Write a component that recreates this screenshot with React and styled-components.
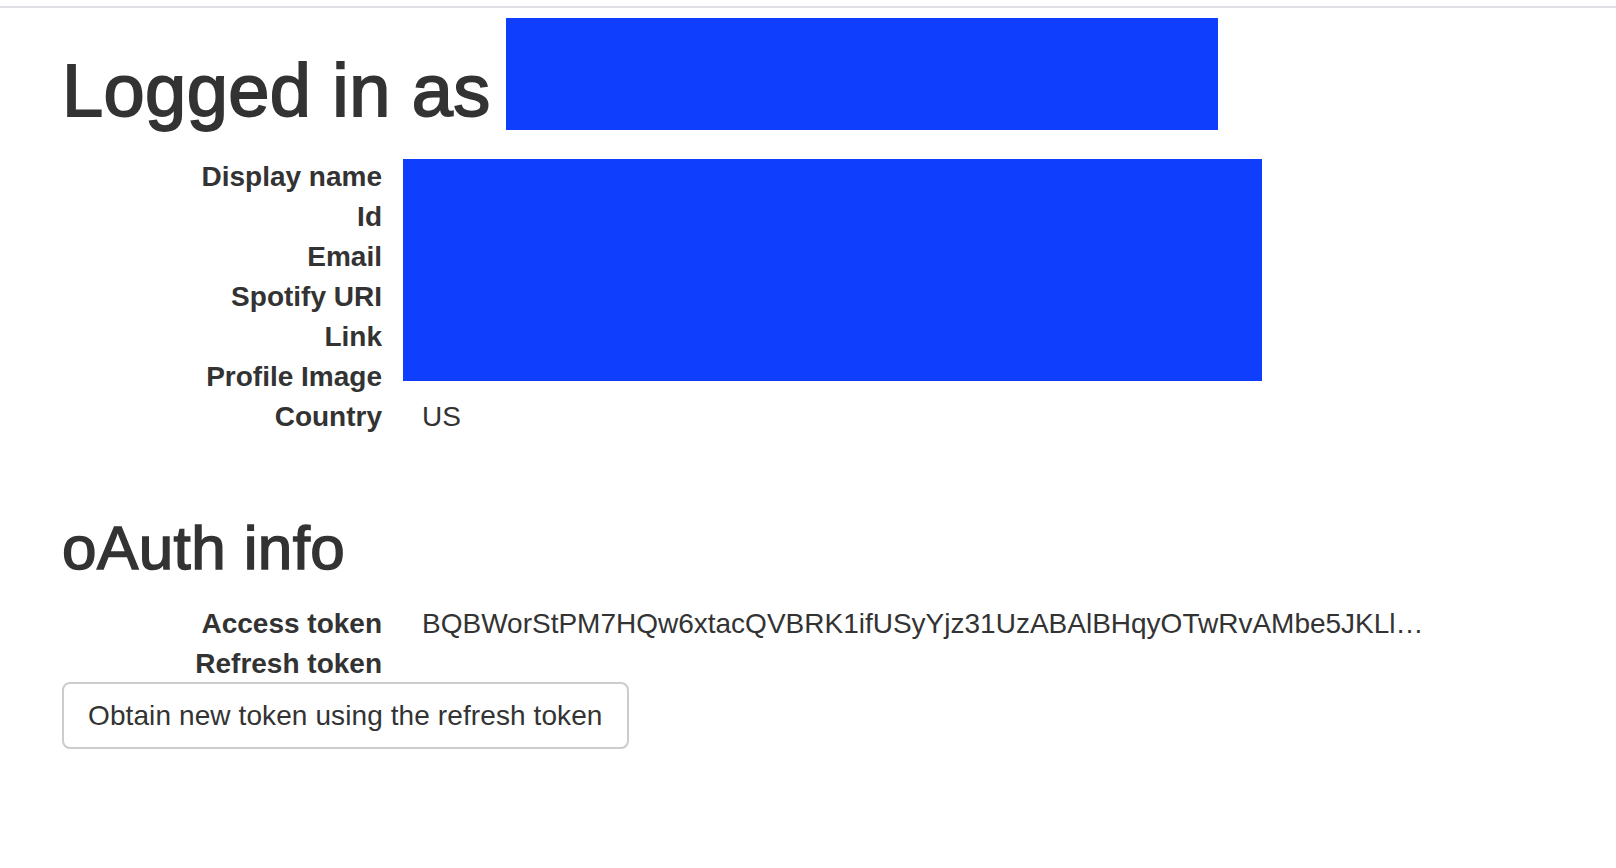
import styled, { createGlobalStyle } from 'styled-components';

const GlobalStyle = createGlobalStyle`
  body {
    margin: 0;
    background: #fff;
    color: #333;
    font-family: "Liberation Sans", Helvetica, Arial, sans-serif;
  }
`;

const REDACT = '#0f3efc';

const TopBar = styled.div`
  height: 6px;
  border-bottom: 2px solid #e0e0e4;
`;

const Container = styled.div`
  padding: 0 62px;
`;

// Helvetica Neue medium look: a light stroke over Liberation Sans regular
const PageTitle = styled.h1`
  display: flex;
  align-items: flex-end;
  margin: 9.5px 0 24px;
  font-size: 74px;
  font-weight: 500;
  line-height: 81px;
  letter-spacing: 0.4px;
  -webkit-text-stroke: 1.8px #333;
`;

const Redacted = styled.div`
  background: ${REDACT};
  width: ${props => props.w}px;
  height: ${props => props.h}px;
`;

const TitleRedacted = styled(Redacted)`
  flex: none;
  margin: 0 0 1px 15px;
`;

const SectionTitle = styled.h2`
  margin: 79px 0 20px;
  font-size: 62px;
  font-weight: 500;
  line-height: 1.1;
  letter-spacing: 0.4px;
  -webkit-text-stroke: 1.5px #333;
`;

const InfoList = styled.dl`
  display: grid;
  grid-template-columns: 320px 1fr;
  grid-auto-rows: 40px;
  column-gap: 40px;
  margin: 0;
  font-size: 28px;
  line-height: 40px;
`;

const Term = styled.dt`
  grid-column: 1;
  padding-top: 2px;
  font-weight: bold;
  text-align: right;
  white-space: nowrap;
`;

const Detail = styled.dd`
  grid-column: 2;
  margin: 0;
  padding-top: 2px;
  white-space: nowrap;
`;

const RedactedDetail = styled(Redacted).attrs({ as: 'dd' })`
  grid-column: 2;
  grid-row: 1 / span ${props => props.span};
  align-self: start;
  margin: 4px 0 0 -19px;
`;

const Button = styled.button`
  display: inline-block;
  padding: 11.5px 24px;
  font-family: inherit;
  font-size: 28px;
  line-height: 40px;
  letter-spacing: 0.1px;
  color: #333;
  background: #fff;
  border: 2px solid #ccc;
  border-radius: 8px;
  cursor: pointer;
`;

const profileLabels = ['Display name', 'Id', 'Email', 'Spotify URI', 'Link', 'Profile Image'];

function App() {
  return (
    <>
      <GlobalStyle />
      <TopBar />
      <Container>
        <PageTitle>
          <span>Logged in as</span>
          <TitleRedacted w={712} h={112.5} />
        </PageTitle>
        <InfoList>
          {profileLabels.map(label => (
            <Term key={label}>{label}</Term>
          ))}
          <RedactedDetail span={profileLabels.length} w={859} h={222} />
          <Term>Country</Term>
          <Detail>US</Detail>
        </InfoList>

        <SectionTitle>oAuth info</SectionTitle>
        <InfoList>
          <Term>Access token</Term>
          <Detail>BQBWorStPM7HQw6xtacQVBRK1ifUSyYjz31UzABAlBHqyOTwRvAMbe5JKLl…</Detail>
          <Term>Refresh token</Term>
          <Detail></Detail>
        </InfoList>
        <Button type="button">Obtain new token using the refresh token</Button>
      </Container>
    </>
  );
}

export default App;
